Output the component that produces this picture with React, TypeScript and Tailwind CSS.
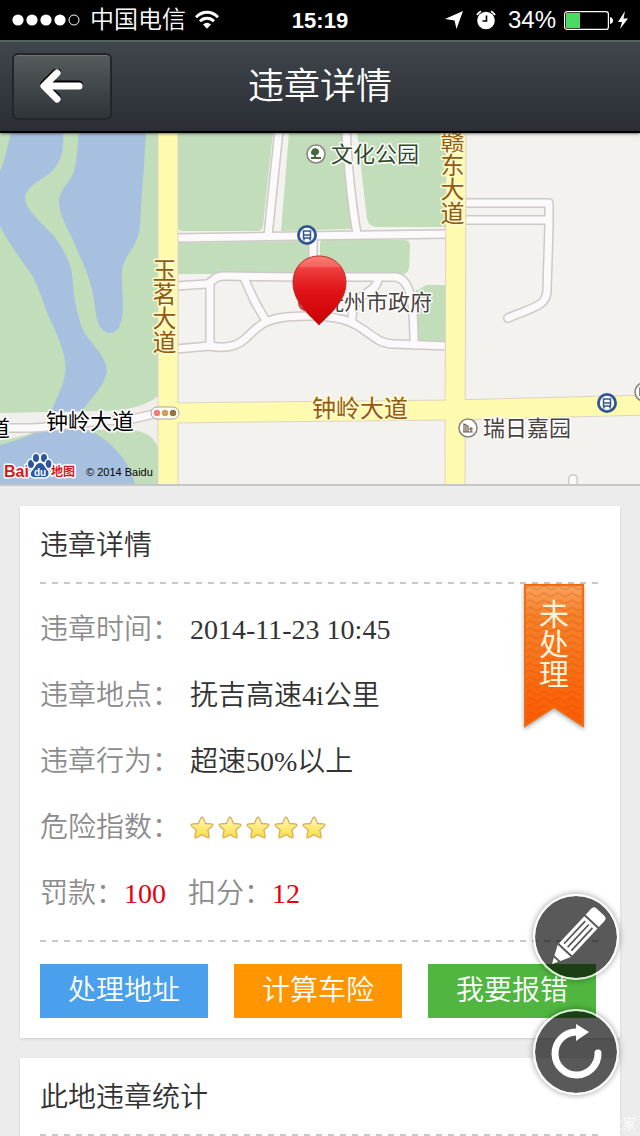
import type { ReactNode } from "react";
import clsx from "clsx";

const waters = [
  "M11 133H63C64 150 62 162 50 173C40 181 25 186 25 200C28 213 48 228 57 240C66 254 72 265 73 282C73 296 78 316 82 328C88 342 106 354 107 371C104 388 90 398 82 412L76 432H42L51 412C58 394 68 378 65 362C64 346 52 325 46 310C41 294 38 288 33 277C22 260 10 246 0 226V172C5 160 8 144 11 133Z",
  "M79 133H146C145 155 142 190 140 225C138 250 124 252 122 272C121 290 126 308 120 325C118 331 113 333 109 333C98 331 96 318 94 300C90 275 82 262 75 245C68 228 58 214 59 200C60 190 68 184 73 174C77 162 77 148 79 133Z",
  "M0 445C20 440 34 434 42 429H86C112 440 130 462 135 484H0Z",
];

const parks = [
  "M178 133H273L263 226Q262 231 257 231H183Q178 231 178 226Z",
  "M289 133H342L351 229L281 231Z",
  "M357 133H446V227H378Q369 227 367 219Z",
  "M178 243L308 241V274H178Z",
  "M320 243Q320 240 324 240H404Q410 240 410 246L409 268Q408 274 402 274H320Z",
  "M419 290Q423 285 430 285H446V342H416V290Z",
];

const lanes = [
  "M279 130L268 236",
  "M346 130C348 165 351 200 357 234",
  "M176 238L300 236L448 234",
  "M176 286L206 284C214 283 212 276 224 276L300 277H396C410 279 414 300 414 345",
  "M210 286V346",
  "M313 238V277",
  "M244 278L255 302L266 321",
  "M378 279C376 296 352 290 352 319",
  "M176 349L210 346C226 349 238 346 246 338C258 327 262 320 286 317C310 315 340 315 356 325C372 334 378 344 394 344L448 346",
  "M464 203H549V225L547 290C547 306 534 307 508 318",
  "M464 220H548",
  "M573 490V479",
  "M-4 428H30C60 427 90 420 128 420L158 413",
];

const avenues = ["M168 125V492", "M456 125L455 492", "M170 413L450 410L646 405"];

const rows = [
  { label: "违章时间：", value: "2014-11-23 10:45" },
  { label: "违章地点：", value: "抚吉高速4i公里" },
  { label: "违章行为：", value: "超速50%以上" },
];

const actions = [
  { label: "处理地址", color: "bg-[#4aa0ec]" },
  { label: "计算车险", color: "bg-[#ff9600]" },
  { label: "我要报错", color: "bg-[#50b640]" },
];

function StatusBar() {
  return (
    <div className="grid h-10 grid-cols-3 items-center bg-black px-3 text-white">
      <div className="flex items-center gap-2">
        <svg className="h-4 w-[70px] shrink-0" viewBox="0 0 70 16">
          {[6, 20, 34, 48].map((x) => (
            <circle key={x} cx={x} cy="8" r="5.6" fill="#fff" />
          ))}
          <circle cx="62" cy="8" r="5" fill="none" stroke="#fff" />
        </svg>
        <span className="text-2xl leading-10 whitespace-nowrap">中国电信</span>
        <svg className="h-5 w-[26px] shrink-0" viewBox="0 0 26 20">
          <g fill="none" stroke="#fff" strokeWidth="2.8">
            <path d="M2 7.2C8.500 .6 17.500 .6 24 7.200" />
            <path d="M6 11.300C10 7.200 16 7.200 20 11.300" />
          </g>
          <path d="M9 14.500Q13 11.200 17 14.500L13 18.800Z" fill="#fff" />
        </svg>
      </div>
      <div className="text-center font-['Liberation_Sans'] text-[22px] font-bold">15:19</div>
      <div className="flex items-center justify-end">
        <svg className="mr-3 h-5 w-5 shrink-0" viewBox="0 0 20 20" fill="#fff">
          <path d="M19 1L12.500 19L10.500 10.500L1 9Z" />
        </svg>
        <svg className="mr-3 h-5 w-5 shrink-0" viewBox="0 0 20 20">
          <circle cx="10" cy="10.500" r="8.800" fill="#fff" />
          <path d="M1 5A12 12 0 0 1 5 1.200M15 1.200A12 12 0 0 1 19 5" stroke="#fff" strokeWidth="1.800" fill="none" />
          <path d="M10.500 5.500V11H6.500" stroke="#000" strokeWidth="1.600" fill="none" />
        </svg>
        <span className="mr-2 font-['Liberation_Sans'] text-2xl">34%</span>
        <svg className="h-5 w-[64px] shrink-0" viewBox="0 0 64 20">
          <rect x=".6" y="1.600" width="43.800" height="17.800" rx="2.500" fill="none" stroke="#fff" strokeWidth="1.200" />
          <rect x="2" y="3" width="14" height="15" fill="#4cd964" />
          <path d="M46 7Q49 8 49 10.500T46 14Z" fill="#fff" />
          <path d="M61 1L54 12H58L56 19L64 8.500H59.500Z" fill="#fff" />
        </svg>
      </div>
    </div>
  );
}

function Header() {
  return (
    <header className="relative z-10 grid h-[93px] grid-cols-3 items-center border-t-2 border-b-2 border-t-[#566067] border-b-black bg-linear-to-b from-[#3f464b] to-[#2b2e35] px-3 shadow-sm shadow-black/40">
      <button
        type="button"
        aria-label="返回"
        className="flex h-[67px] w-[100px] items-center justify-center rounded-md border-2 border-[#22262a] bg-linear-to-b from-[#565b5e] to-[#2f3438] shadow-[inset_0_1px_0_#6d7275]"
      >
        <svg className="h-9 w-[46px]" viewBox="0 0 46 36" fill="none" strokeWidth="7" strokeLinecap="round" strokeLinejoin="round">
          <path d="M40 15H6M18 2L5 15L18 28" stroke="#000" />
          <path d="M40 17H6M18 4L5 17L18 30" stroke="#fff" />
        </svg>
      </button>
      <h1 className="text-center text-4xl whitespace-nowrap text-white">违章详情</h1>
    </header>
  );
}

function BusStop({ x, y }: { x: number; y: number }) {
  return (
    <g transform={`translate(${x} ${y})`}>
      <circle r="10" fill="#2f5694" />
      <circle r="7.200" fill="#fff" />
      <path d="M-3.500 3V-4H3.500V3ZM-3.500 0H3.500M-3 3V5.500M3 3V5.500" fill="none" stroke="#2f5694" strokeWidth="1.500" />
    </g>
  );
}

function Place({ x, y, children }: { x: number; y: number; children?: ReactNode }) {
  return (
    <g transform={`translate(${x} ${y})`}>
      <circle r="9" fill="#fff" stroke="#8b8580" strokeWidth="1.600" />
      {children}
    </g>
  );
}

function BaiduLogo() {
  return (
    <g>
      <g stroke="#fff" strokeWidth="3" strokeLinejoin="round" paintOrder="stroke" className="font-bold">
        <g fill="#d8171c">
          <text x="4" y="477" fontSize="16" className="font-['Liberation_Sans']">Bai</text>
          <text x="51" y="476" fontSize="12">地图</text>
        </g>
        <g fill="#2b55a0">
          <ellipse cx="31" cy="464" rx="3" ry="4" />
          <ellipse cx="36" cy="458" rx="3" ry="4" />
          <ellipse cx="44" cy="458" rx="3" ry="4" />
          <ellipse cx="48.500" cy="464" rx="2.800" ry="4" />
          <path d="M40 463C44 463 45 468 48 471C50 476 46 478 42 477H37C32 478 29 475 32 471C35 468 36 463 40 463Z" />
        </g>
      </g>
      <text x="34" y="476" fontSize="10" fill="#fff" className="font-['Liberation_Sans'] font-bold">du</text>
    </g>
  );
}

function RoadMap() {
  return (
    <section className="border-b-2 border-[#c6c6c6] font-normal">
      <svg className="block h-[351px] w-full" viewBox="0 133 640 351" preserveAspectRatio="xMidYMid slice">
        <defs>
          <linearGradient id="pin" x1="0" y1="0" x2="0" y2="1">
            <stop offset="0" stopColor="#fb8078" />
            <stop offset=".16" stopColor="#f4605c" />
            <stop offset=".17" stopColor="#ef3f40" />
            <stop offset=".5" stopColor="#e01419" />
            <stop offset="1" stopColor="#c90000" />
          </linearGradient>
        </defs>
        <rect y="133" width="640" height="351" fill="#f4f2ef" />
        <rect y="133" width="158" height="351" fill="#c2ddba" />
        {waters.map((d) => (
          <path key={d} d={d} fill="#a7c0e0" />
        ))}
        {parks.map((d) => (
          <path key={d} d={d} fill="#c2ddba" />
        ))}
        <path d="M0 413L100 411Q140 411 158 396V448Q152 431 130 430H40Q20 438 0 440Z" fill="#f1efec" />
        <g fill="none" stroke="#cec8c6" strokeWidth="10" strokeLinecap="round" strokeLinejoin="round">
          {lanes.map((d) => (
            <path key={d} d={d} />
          ))}
        </g>
        <g fill="none" stroke="#fbf9f9" strokeWidth="7" strokeLinecap="round" strokeLinejoin="round">
          {lanes.map((d) => (
            <path key={d} d={d} />
          ))}
        </g>
        <g fill="none" stroke="#ddd3c5" strokeWidth="21">
          {avenues.map((d) => (
            <path key={d} d={d} />
          ))}
        </g>
        <g fill="none" stroke="#fffbae" strokeWidth="19">
          {avenues.map((d) => (
            <path key={d} d={d} />
          ))}
        </g>

        <rect x="151" y="407" width="28" height="12" rx="6" fill="#fff" stroke="#aaa29b" />
        <circle cx="157" cy="413" r="3.200" fill="#ee7f77" />
        <circle cx="165" cy="413" r="3.200" fill="#cf9f58" />
        <circle cx="173" cy="413" r="3.200" fill="#947440" />
        <BusStop x={307} y={235} />
        <BusStop x={607} y={403} />
        <Place x={316} y={154}>
          <path d="M-5 -1Q-5 -5 -1 -6Q4 -5 3 -1Q2 1 0 1V3H5V5H-5V3H-2V1Q-5 1 -5 -1Z" fill="#45693b" />
        </Place>
        <Place x={468} y={428}>
          <path d="M-4 4V-4L0 -2V4M-5 4H5M-2 -2V4M3 4V-1M1 1H5" fill="none" stroke="#6c5a4b" strokeWidth="1.200" />
        </Place>
        <Place x={644} y={392}>
          <path d="M-4 4V-4H0" fill="none" stroke="#6c5a4b" strokeWidth="1.500" />
        </Place>
        <circle cx="306" cy="303" r="7" fill="#fff" stroke="#c93a36" strokeWidth="2" />

        <g stroke="#fff" strokeWidth="3" strokeLinejoin="round" paintOrder="stroke" fontSize="22">
          <text x="331" y="162" fill="#30482b">文化公园</text>
          <text x="322" y="310" fill="#4b4340">抚州市政府</text>
          <text x="483" y="436" fill="#4b4340">瑞日嘉园</text>
          <text x="46" y="429" fill="#000">钟岭大道</text>
          <text x="-12" y="436" fill="#000">道</text>
        </g>
        <g stroke="#fffbd0" strokeWidth="3" strokeLinejoin="round" paintOrder="stroke" fontSize="24" fill="#935a12">
          <text x="312" y="417">钟岭大道</text>
          <text x="162" y="258" className="[writing-mode:vertical-rl]">玉茗大道</text>
          <text x="450" y="129" className="[writing-mode:vertical-rl]">赣东大道</text>
        </g>

        <path
          d="M319 325C313 318 293 303 293 283C293 266 305 256 319 256S346 266 346 283C346 303 325 318 319 325Z"
          fill="url(#pin)"
          stroke="#b8322e"
        />
        <BaiduLogo />
        <text x="86" y="476" fontSize="11" className="font-['Liberation_Sans']">© 2014 Baidu</text>
      </svg>
    </section>
  );
}

function Divider({ className }: { className?: string }) {
  return (
    <hr
      className={clsx(
        "h-0.5 border-0 bg-[repeating-linear-gradient(90deg,#c8c8c8_0_6px,transparent_6px_12px)]",
        className,
      )}
    />
  );
}

function Stars() {
  return (
    <div role="img" aria-label="5" className="flex gap-1">
      {[1, 2, 3, 4, 5].map((n) => (
        <svg key={n} className="size-6" viewBox="0 0 24 24">
          <defs>
            <linearGradient id={`star${n}`} x1="0" y1="0" x2="0" y2="1">
              <stop offset="0" stopColor="#fffac0" />
              <stop offset="1" stopColor="#fbdc3c" />
            </linearGradient>
          </defs>
          <path
            d="M12 1Q13 1 15.500 7.500Q22.500 7.500 23 9Q23 10 17.800 14Q19.800 21 18.800 21.800Q17.500 22.300 12 18.500Q6.500 22.300 5.200 21.800Q4.200 21 6.200 14Q1 10 1 9Q1.500 7.500 8.500 7.500Q11 1 12 1Z"
            fill={`url(#star${n})`}
            stroke="#d9ad5a"
            strokeWidth="1.300"
            strokeLinejoin="round"
          />
        </svg>
      ))}
    </div>
  );
}

function Ribbon() {
  return (
    <div className="absolute top-[78px] right-[35px] h-[146px] w-[62px]">
      <svg className="absolute inset-0 h-full w-full overflow-visible drop-shadow-[0_2px_2px_#0005]" viewBox="0 0 62 146">
        <defs>
          <linearGradient id="ribbon" x1="0" y1="0" x2="0" y2="1">
            <stop offset="0" stopColor="#f9a35f" />
            <stop offset=".2" stopColor="#f6832c" />
            <stop offset="1" stopColor="#fd5a00" />
          </linearGradient>
          <pattern id="weave" width="14" height="7" patternUnits="userSpaceOnUse">
            <path d="M0 6L7 2L14 6" fill="none" stroke="#c84800" strokeOpacity=".22" strokeWidth="2" />
          </pattern>
        </defs>
        <path d="M2 1H60V142L31 123L2 142Z" fill="url(#ribbon)" />
        <path d="M2 1H60V142L31 123L2 142Z" fill="url(#weave)" stroke="#ef6c13" strokeWidth="2" />
      </svg>
      <div className="relative mx-auto w-[30px] pt-4 text-center text-3xl leading-[30px] font-normal text-[#fff4da]">未处理</div>
    </div>
  );
}

function DetailCard() {
  return (
    <section className="relative bg-white px-5 pb-5 shadow-sm">
      <h2 className="h-[76px] leading-[80px]">违章详情</h2>
      <Divider />
      <dl className="py-[13px] leading-[66px]">
        {rows.map((row) => (
          <div key={row.label} className="flex">
            <dt className="w-[150px] text-[#8c8c8c]">{row.label}</dt>
            <dd>{row.value}</dd>
          </div>
        ))}
        <div className="flex items-center">
          <dt className="w-[150px] text-[#8c8c8c]">危险指数：</dt>
          <dd>
            <Stars />
          </dd>
        </div>
        <div className="flex">
          <dt className="text-[#8c8c8c]">罚款：</dt>
          <dd className="mr-[22px] text-[#e60012]">100</dd>
          <dt className="text-[#8c8c8c]">扣分：</dt>
          <dd className="text-[#e60012]">12</dd>
        </div>
      </dl>
      <Divider />
      <div className="flex gap-[26px] pt-[22px]">
        {actions.map((action) => (
          <button key={action.label} type="button" className={clsx("h-[54px] w-[30%] text-white", action.color)}>
            {action.label}
          </button>
        ))}
      </div>
      <Ribbon />
    </section>
  );
}

function FloatButton({ label, children }: { label: string; children: ReactNode }) {
  return (
    <button
      type="button"
      aria-label={label}
      className="size-[86px] rounded-full border-2 border-white/80 bg-black/65 bg-clip-padding shadow-[0_0_6px_#0006]"
    >
      {children}
    </button>
  );
}

export default function App() {
  return (
    <div className="relative min-h-screen overflow-hidden bg-[#ececec] font-['Liberation_Serif','Noto_Sans_CJK_SC',serif] text-[28px] font-[350] text-[#333]">
      <StatusBar />
      <Header />
      <RoadMap />
      <main className="flex flex-col gap-5 px-5 pt-5">
        <DetailCard />
        <section className="bg-white px-5 shadow-sm">
          <h2 className="h-[76px] leading-[80px]">此地违章统计</h2>
          <Divider />
        </section>
      </main>
      <div className="absolute right-1 bottom-1 text-[13px] leading-4 text-white">之家</div>

      <div className="fixed right-[21px] bottom-[41px] flex flex-col gap-[29px]">
        <FloatButton label="编辑">
          <svg className="h-full w-full" viewBox="0 0 82 82">
            <g transform="translate(17 68) rotate(-47)">
              <path d="M0 0L6 -3V3Z" fill="#fff" />
              <path d="M8 -4L18 -9V9L8 4Z" fill="#fff" />
              <rect x="20" y="-9" width="37" height="18" fill="#fff" />
              <path d="M23 -5H54M23 0H54M23 5H54" stroke="#555" strokeWidth="1.700" />
              <path d="M59 -9H67Q71 -9 71 -5V5Q71 9 67 9H59Z" fill="#fff" />
            </g>
          </svg>
        </FloatButton>
        <FloatButton label="刷新">
          <svg className="h-full w-full" viewBox="0 0 82 82">
            <path d="M63 42A21.500 21.500 0 1 1 41 21" fill="none" stroke="#fff" strokeWidth="7" strokeLinecap="round" />
            <path d="M41 13L54 21L41 30Z" fill="#fff" />
          </svg>
        </FloatButton>
      </div>
    </div>
  );
}
